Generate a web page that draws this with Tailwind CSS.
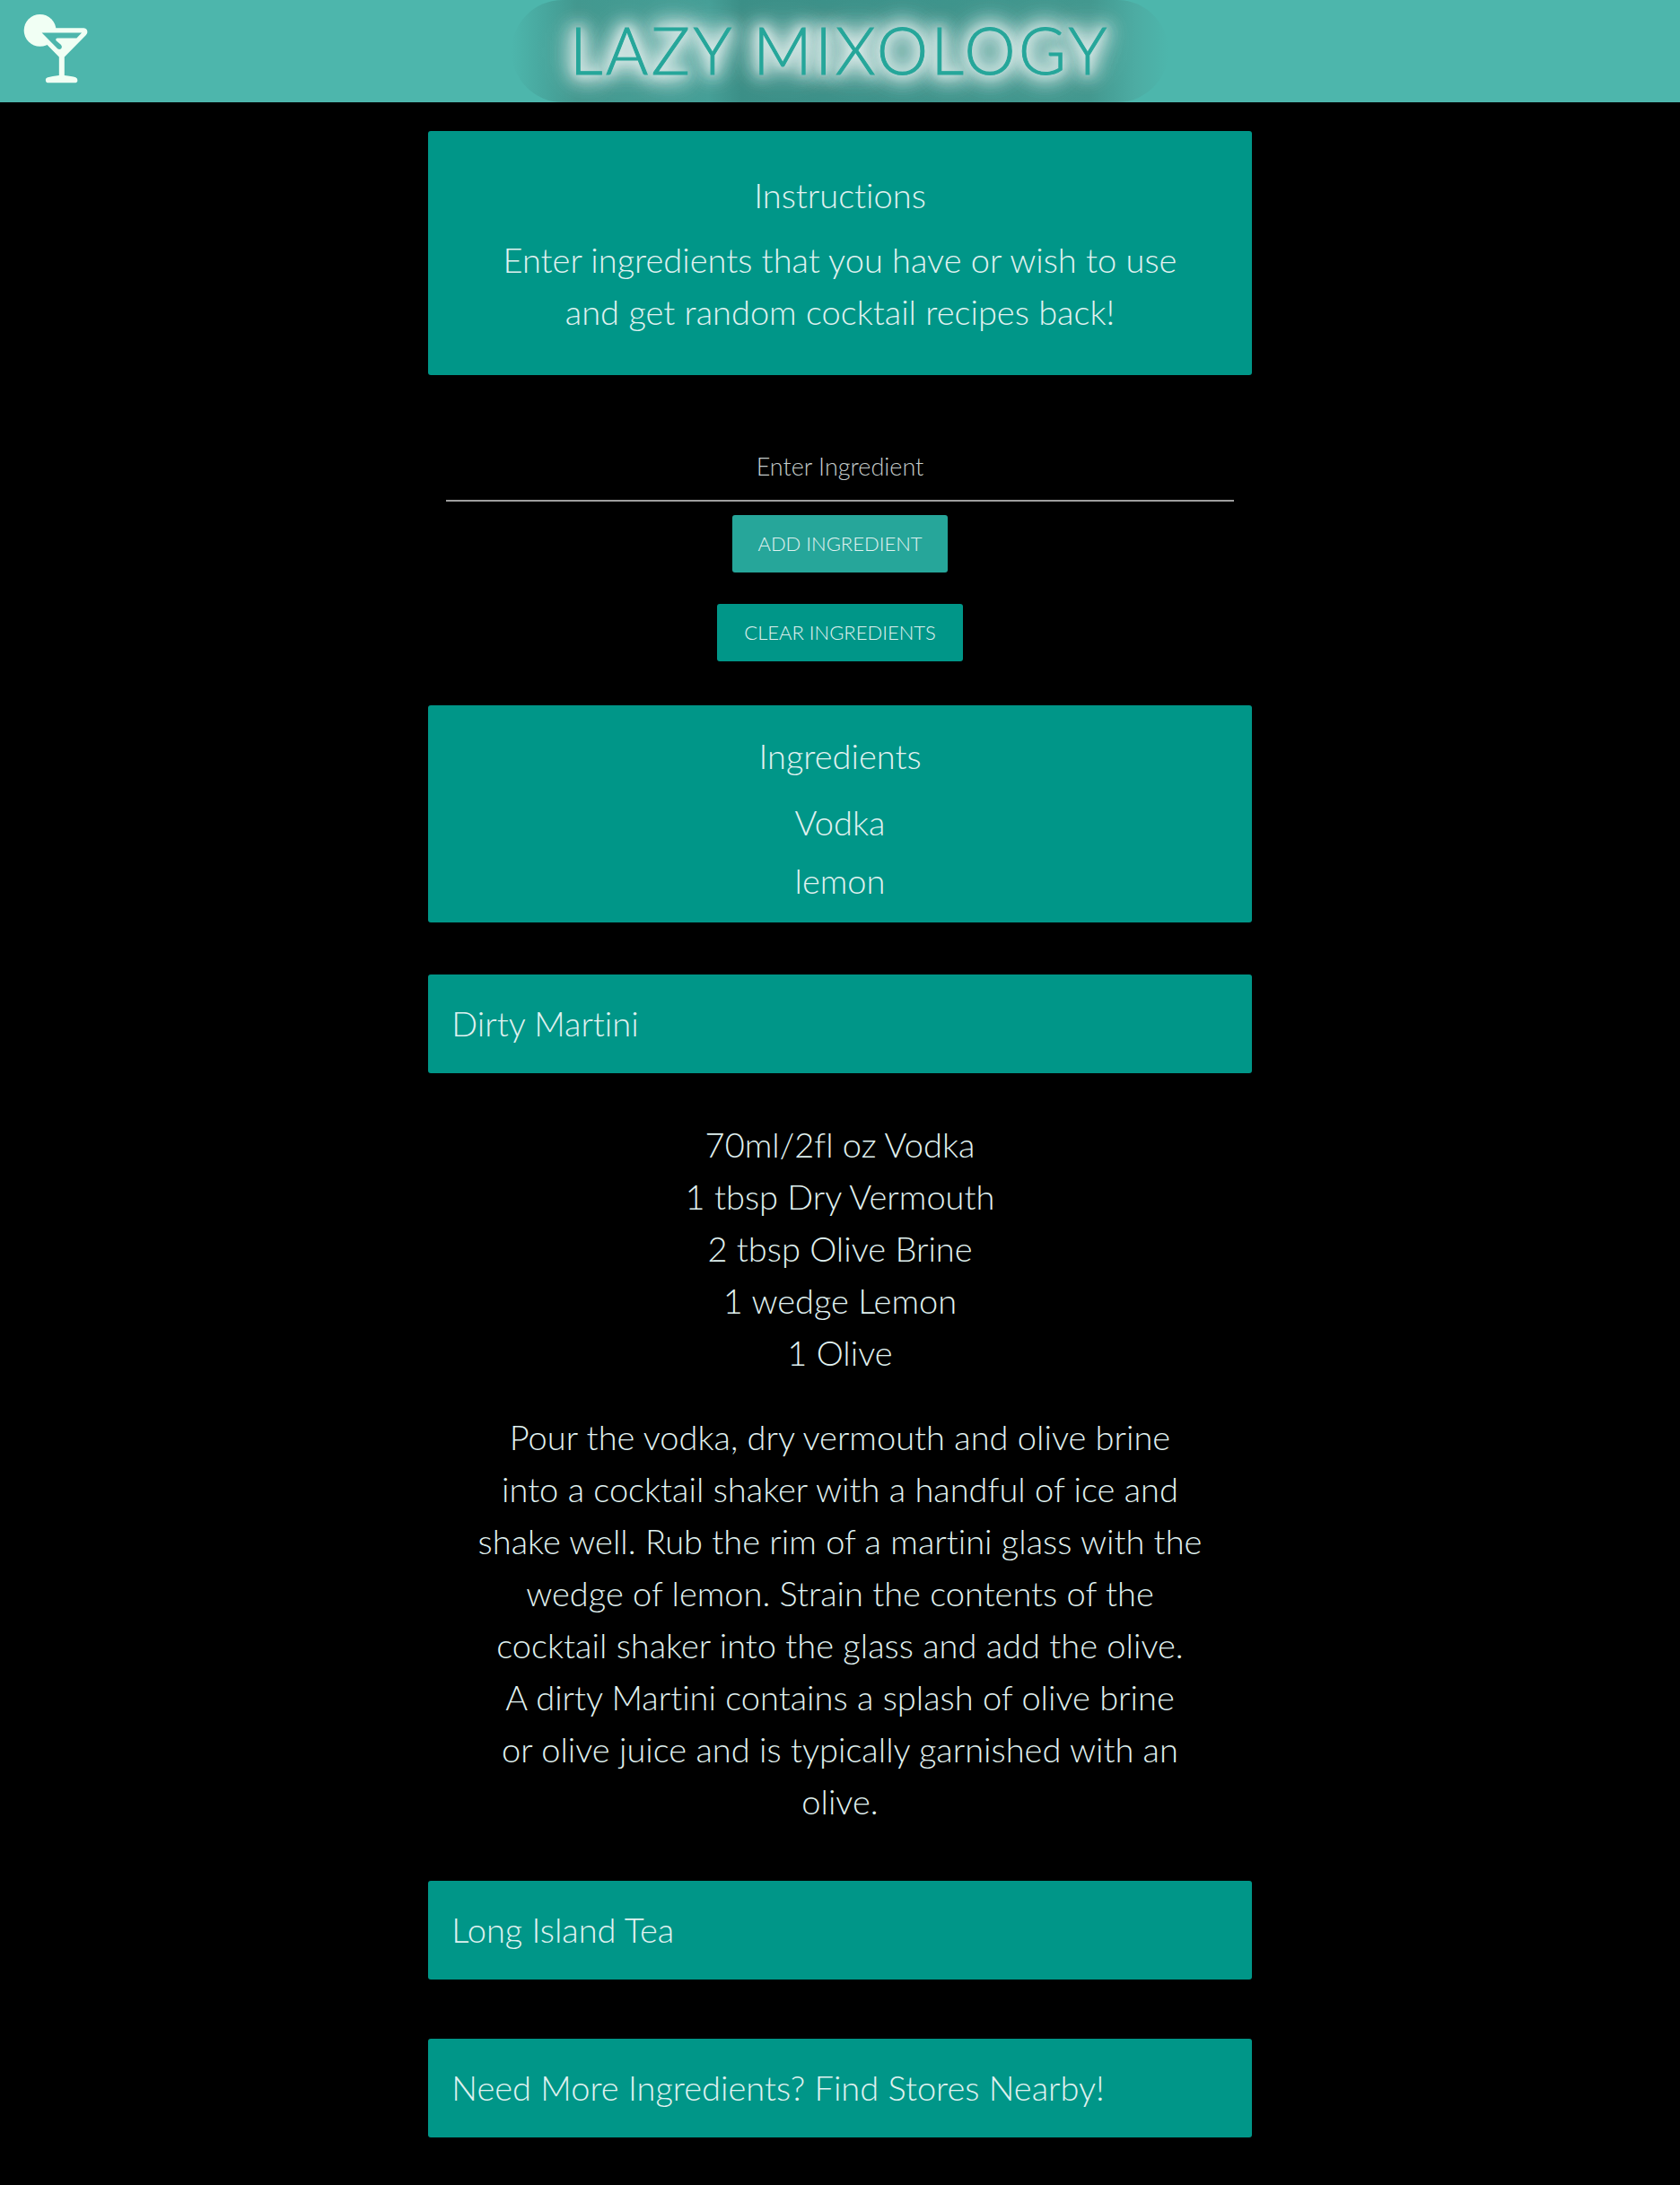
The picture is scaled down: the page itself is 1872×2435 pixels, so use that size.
<!DOCTYPE html>
<html lang="en">
<head>
<meta charset="utf-8">
<meta name="viewport" content="width=device-width, initial-scale=1">
<title>Lazy Mixology</title>
<script src="https://cdn.jsdelivr.net/npm/@tailwindcss/browser@4"></script>
</head>
<body class="min-h-screen bg-black font-['Lato',sans-serif] font-light text-[#e0f2f1] [font-variant-ligatures:none]">
  <header class="relative flex h-[114px] items-center justify-center overflow-hidden bg-[#4db6ac]">
    <a href="#" aria-label="Home" class="absolute top-[15px] left-[26px]">
      <svg class="h-[79px] w-[73px]" viewBox="78 46 220 236" fill="#f1fff4" aria-hidden="true">
        <circle cx="134" cy="102" r="54"/>
        <path d="M130 94H281Q294 96 293 109Q292 114 288 118L216 191V253Q240 255 254 260Q261 263 260 271Q259 278 250 278H163Q154 278 153 270Q152 262 160 260Q175 255 198 253V191L150 142L124 112Z"/>
        <path fill="#4db6ac" d="M140 110L193 163Q199 168 205 163Q210 157 204 150L188 136Q185 129 193 128H257L274 110Z"/>
      </svg>
    </a>
    <div class="flex h-full w-[732px] items-center justify-center rounded-[60px] bg-[linear-gradient(90deg,#4db6ac_0%,#49aaa1_4%,#42988f_10%,#459f97_30%,#3b8f87_35%,#3d938b_60%,#42988f_88%,#4daca3_95%,#4db6ac_100%)] pb-1">
      <h1 class="text-[72px] leading-[110px] tracking-wider whitespace-nowrap text-[#26a69a] [-webkit-text-stroke:1px_#26a69a] [text-shadow:0_0_10px_#e2efed,0_0_16px_#e2efed,0_0_20px_#dcebe9,0_0_20px_#dcebe9,0_0_24px_#dcebe9,0_0_24px_#dcebe9,0_0_30px_#dcebe9,0_0_30px_#cfe2e0,0_0_40px_#cfe2e0]">LAZY MIXOLOGY</h1>
    </div>
  </header>

  <main class="mx-auto flex w-[49%] flex-col items-center pt-8 pb-[53px] text-[38px] leading-[58px]">
    <section class="w-full rounded-[3px] bg-[#009688] px-12 pt-[38px] pb-[42px] text-center">
      <h2 class="mb-[10px] leading-[66px]">Instructions</h2>
      <p>Enter ingredients that you have or wish to use<br>and get random cocktail recipes back!</p>
    </section>

    <form class="mt-[66px] flex w-full flex-col items-center px-5">
      <input type="text" aria-label="Enter Ingredient" placeholder="Enter Ingredient" class="h-[75px] w-full border-b-2 border-[#9e9e9e] bg-transparent pb-[2px] text-center text-[27px] leading-[40px] outline-none placeholder:text-[#c4cccb]">
      <button type="submit" class="mt-[15px] h-16 w-60 rounded-[3px] bg-[#26a69a] text-[22px]">ADD INGREDIENT</button>
      <button type="button" class="mt-[35px] h-16 w-[274px] rounded-[3px] bg-[#009688] text-[22px]">CLEAR INGREDIENTS</button>
    </form>

    <section class="mt-[49px] w-full rounded-[3px] bg-[#009688] pt-[27px] pb-[14px] text-center">
      <h2 class="mb-[13px]">Ingredients</h2>
      <ul class="leading-[65px]">
        <li>Vodka</li>
        <li>lemon</li>
      </ul>
    </section>

    <article class="mt-[58px] w-full">
      <h2 class="rounded-[3px] bg-[#009688]"><a href="#" class="block px-[26px] pt-[25px] pb-[27px]">Dirty Martini</a></h2>
      <div class="mt-[50px] text-center">
        <ul>
          <li>70ml/2fl oz Vodka</li>
          <li>1 tbsp Dry Vermouth</li>
          <li>2 tbsp Olive Brine</li>
          <li>1 wedge Lemon</li>
          <li>1 Olive</li>
        </ul>
        <p class="mt-9">Pour the vodka, dry vermouth and olive brine<br>into a cocktail shaker with a handful of ice and<br>shake well. Rub the rim of a martini glass with the<br>wedge of lemon. Strain the contents of the<br>cocktail shaker into the glass and add the olive.<br>A dirty Martini contains a splash of olive brine<br>or olive juice and is typically garnished with an<br>olive.</p>
      </div>
    </article>

    <h2 class="mt-[60px] w-full rounded-[3px] bg-[#009688]"><a href="#" class="block px-[26px] pt-[25px] pb-[27px]">Long Island Tea</a></h2>
    <h2 class="mt-[66px] w-full rounded-[3px] bg-[#009688]"><a href="#" class="block px-[26px] pt-[25px] pb-[27px]">Need More Ingredients? Find Stores Nearby!</a></h2>
  </main>
</body>
</html>
